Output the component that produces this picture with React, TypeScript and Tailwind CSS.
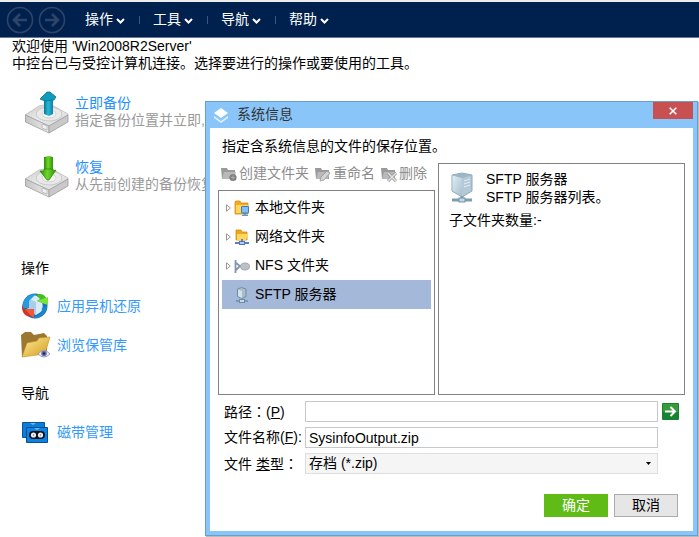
import type { ReactNode } from "react";

const menus = ["操作", "工具", "导航", "帮助"];

function NavArrow({ back }: { back?: boolean }) {
  return (
    <button type="button" aria-label={back ? "后退" : "前进"} className="size-7">
      <svg viewBox="0 0 28 28" className="size-7" fill="none" stroke="#2f4468">
        <circle cx="14" cy="14" r="12.5" strokeWidth="1.6" />
        <path
          d={back ? "M21 14H8.5M14 8l-6 6 6 6" : "M7 14h12.5M14 8l6 6-6 6"}
          strokeWidth="2.6"
        />
      </svg>
    </button>
  );
}

function DriveIcon({ up }: { up?: boolean }) {
  const id = up ? "up" : "down";
  return (
    <svg viewBox="0 0 44 44" className="size-11 shrink-0" aria-hidden="true">
      <defs>
        <linearGradient id={`drive-${id}`} x1="0" y1="0" x2="1" y2="1">
          <stop offset="0" stopColor="#c9c9c9" />
          <stop offset="0.5" stopColor="#ececec" />
          <stop offset="1" stopColor="#d4d4d4" />
        </linearGradient>
        <linearGradient id={`side-${id}`} x1="0" y1="0" x2="1" y2="0">
          <stop offset="0" stopColor="#c4c4c4" />
          <stop offset="1" stopColor="#ededed" />
        </linearGradient>
        <linearGradient id={`arrow-${id}`} x1="0" y1="0" x2="1" y2="0">
          <stop offset="0" stopColor={up ? "#087592" : "#2c8b06"} />
          <stop offset="0.45" stopColor={up ? "#2cb8d8" : "#6ed62a"} />
          <stop offset="1" stopColor={up ? "#0784a5" : "#329506"} />
        </linearGradient>
      </defs>
      <path d="M0 25l14-9 5-1h8l16 9v1L24 36z" fill={`url(#drive-${id})`} stroke="#bdbdbd" strokeWidth=".8" />
      <path d="M.5 25L24 36v7L.5 32z" fill={`url(#side-${id})`} stroke="#9c9c9c" strokeWidth=".8" />
      <path d="M24 36l19-11v7L24 43z" fill="#c9c9c9" stroke="#9c9c9c" strokeWidth=".8" />
      <path d="M17 34v4l5 2v-4z" fill="#f2f2f2" stroke="#aaa" strokeWidth=".7" />
      <ellipse cx="24" cy="24" rx="13" ry="7" fill="#e9e9e9" stroke="#c2c2c2" strokeWidth=".8" />
      <ellipse cx="24" cy="24" rx="7" ry="4" fill="#f3f3f3" stroke="#cdcdcd" strokeWidth=".8" />
      {up ? (
        <>
          <path d="M19 9h9v15l-4 2-5-2z" fill={`url(#arrow-${id})`} />
          <path d="M15 9l7-7h3l6 5-2 3-9 1z" fill="#109aba" stroke="#087592" strokeWidth=".8" />
        </>
      ) : (
        <>
          <path d="M19 3l5-1 4 1v14h-9z" fill={`url(#arrow-${id})`} />
          <path d="M15 17h4v-2h9v2l3-1-7 10h-2z" fill={`url(#arrow-${id})`} stroke="#2c8b06" strokeWidth=".8" />
        </>
      )}
    </svg>
  );
}

function RestoreIcon() {
  return (
    <svg viewBox="0 0 28 28" className="size-7" aria-hidden="true">
      <circle cx="14" cy="14" r="12.5" fill="#1972bd" />
      <circle cx="14" cy="14" r="8" fill="#95c6ed" />
      <path d="M8 7l5-4 8 3v13l-6 4-7-4z" fill="#d9ebfa" />
      <path d="M8 7l7 3v13l-7-4z" fill="#aacde9" />
      <path d="M2 13C3 6 8 2 15 2L8 9v7H1z" fill="#249ddd" />
      <path d="M15 3c6-3 11 1 11 7l1 3-11-4 3-2z" fill="#45bd20" />
      <path d="M16 9l11-4v8z" fill="#7be33b" />
      <path d="M1 12l2 6 1-1h9v8l-2-1C5 26 0 21 1 12z" fill="#d8331d" />
      <path d="M4 17h9v9l-4-3z" fill="#f0583a" />
      <path d="M14 26c7 0 11-5 12-12l-5 2c0 5-3 8-7 8z" fill="#1a87c8" />
    </svg>
  );
}

function VaultIcon() {
  return (
    <svg viewBox="0 0 30 28" className="h-7 w-[30px]" aria-hidden="true">
      <defs>
        <linearGradient id="vault-front" x1="0" y1="0" x2="1" y2="1">
          <stop offset="0" stopColor="#ffeb9b" />
          <stop offset="1" stopColor="#d49b19" />
        </linearGradient>
      </defs>
      <path d="M0 4l4-3h6l3 3 10-2 3 3v15L1 26z" fill="#9b7732" />
      <path d="M1 26L6 12l10-2 2-3 11-1-5 17z" fill="url(#vault-front)" stroke="#c59428" strokeWidth=".6" />
      <path d="M17 23q6-7 12 0-6 6-12 0z" fill="#eef0fa" stroke="#9a9ebb" />
      <circle cx="23" cy="22.5" r="2.8" fill="#6673ad" />
      <circle cx="23" cy="22.5" r="1.2" fill="#23263e" />
    </svg>
  );
}

function TapeIcon() {
  return (
    <svg viewBox="0 0 28 28" className="size-7" aria-hidden="true">
      <path d="M1.5 4.500h22v15h-22z" fill="#087dda" stroke="#07569a" />
      <path d="M9 5l3 2 3-2z" fill="#73bbf2" />
      <path d="M5.500 9.500h21v15h-21z" fill="#0b83e2" stroke="#064f8d" />
      <path d="M13 10l3 2 3-2z" fill="#73bbf2" />
      <rect x="8" y="13" width="16" height="8" rx="4" fill="#07121d" />
      <circle cx="12.500" cy="17" r="2.600" fill="#eee" />
      <circle cx="19.500" cy="17" r="2.600" fill="#eee" />
      <circle cx="12.500" cy="17" r=".7" fill="#777" />
      <circle cx="19.500" cy="17" r=".7" fill="#777" />
    </svg>
  );
}

function ToolIcon({ kind }: { kind: "new" | "rename" | "delete" }) {
  return (
    <svg viewBox="0 0 16 16" className="size-4" aria-hidden="true">
      <path d="M0 2h6l1 2h7v9H1z" fill="#9a9a9a" />
      <path d="M1 13l2-7h12l-2 7z" fill="#b9b9b9" />
      {kind === "new" && (
        <>
          <circle cx="12" cy="11.5" r="3.6" fill="#808080" />
          <path d="M12 9.500v4M10 11.500h4" stroke="#aaa" />
        </>
      )}
      {kind === "rename" && <path d="M5 15l1-4 6-6 3 2-6 7z" fill="#d3d3d3" stroke="#999" strokeWidth=".8" />}
      {kind === "delete" && (
        <>
          <path d="M7 7l8 8M15 7l-8 8" stroke="#909090" strokeWidth="3" />
          <path d="M7 7l8 8M15 7l-8 8" stroke="#e4e4e4" strokeWidth="1.6" />
        </>
      )}
    </svg>
  );
}

function LocalIcon() {
  return (
    <svg viewBox="0 0 16 16" className="size-4" aria-hidden="true">
      <path d="M1 2l1-1h4l1 2h7v11H1z" fill="#f1aa22" stroke="#dc8b0d" strokeWidth=".8" />
      <path d="M2 13V5h12v8z" fill="#ffd75d" />
      <rect x="7.5" y="6.5" width="7" height="6.5" rx=".5" fill="#82bff7" stroke="#397ac2" />
      <path d="M11 13v2M8 15.3h6" stroke="#397ac2" />
    </svg>
  );
}

function NetworkIcon() {
  return (
    <svg viewBox="0 0 16 16" className="size-4" aria-hidden="true">
      <path d="M2 1h5l1 2h5v8H2z" fill="#efa51e" stroke="#d88a0d" strokeWidth=".8" />
      <path d="M3 10V5h11l-2 6H3z" fill="#ffd75d" />
      <path d="M8 10v3M1 14h14" stroke="#5b83bd" strokeWidth="2" />
      <rect x="5.5" y="12.5" width="5" height="3" fill="#a9d0fa" stroke="#5476b7" />
    </svg>
  );
}

function NfsIcon() {
  return (
    <svg viewBox="0 0 16 16" className="size-4" aria-hidden="true">
      <path d="M1.500 2v13M2 5l4 3-4 4" fill="none" stroke="#8495ab" strokeWidth="1.8" />
      <ellipse cx="11" cy="8.500" rx="4.500" ry="3.500" fill="#bcc1c8" stroke="#959da7" strokeWidth=".8" />
    </svg>
  );
}

function ServerIcon({ large }: { large?: boolean }) {
  if (!large) {
    return (
      <svg viewBox="0 0 16 16" className="size-4" aria-hidden="true">
        <path d="M3.500 2l4-1.500 4.500 1.500v7.500l-4 2-4.500-2z" fill="#a9bdca" stroke="#6f8da2" />
        <path d="M4 2.500L8 4v7l-4-2z" fill="#d5e2ea" />
        <path d="M8 12v1M2 14h12" stroke="#6f8da2" strokeWidth="1.600" />
        <rect x="5.500" y="12.500" width="5" height="3" fill="#c7d8e2" stroke="#6f8da2" />
      </svg>
    );
  }
  return (
    <svg viewBox="0 0 22 31" className="h-[31px] w-[22px]" aria-hidden="true">
      <defs>
        <linearGradient id="server-face" x1="0" y1="0" x2="1" y2="1">
          <stop offset="0" stopColor="#e2edf3" />
          <stop offset="1" stopColor="#a5bfce" />
        </linearGradient>
      </defs>
      <path d="M1 3l10-2 10 2v16l-10 6-10-6z" fill="#b4c8d5" stroke="#8da9ba" />
      <path d="M1.500 3.500L11 6v18l-9.500-5.500z" fill="url(#server-face)" />
      <path d="M1.500 3.300L11 1.500l9.500 1.800L11 6z" fill="#9bb6c7" />
      <path d="M13 9l6-2M13 12l6-2M13 15l6-2" fill="none" stroke="#e4eef4" />
      <path d="M11 24v3M1 28h20" stroke="#7f9db0" strokeWidth="3" />
      <rect x="8" y="26" width="6" height="4" fill="#c7d8e2" stroke="#7293a8" />
    </svg>
  );
}

const tree: { label: string; icon: ReactNode; selected?: boolean }[] = [
  { label: "本地文件夹", icon: <LocalIcon /> },
  { label: "网络文件夹", icon: <NetworkIcon /> },
  { label: "NFS 文件夹", icon: <NfsIcon /> },
  { label: "SFTP 服务器", icon: <ServerIcon />, selected: true },
];

function Colon() {
  return <span className="font-['Noto_Sans_CJK_TC',sans-serif]" lang="zh-TW">：</span>;
}

function SideLink({ icon, children }: { icon: ReactNode; children: ReactNode }) {
  return (
    <a href="#" className="flex h-7 w-fit items-center text-[#3399ff]">
      <span className="w-9">{icon}</span>
      {children}
    </a>
  );
}

function TaskRow({ up, title, text }: { up?: boolean; title: string; text: string }) {
  return (
    <div className="flex h-11 items-center gap-[6px] whitespace-nowrap">
      <DriveIcon up={up} />
      <div>
        <a href="#" className="block w-fit text-[#1e90ff]">{title}</a>
        <p className="text-[#999]">{text}</p>
      </div>
    </div>
  );
}

function Dialog() {
  return (
    <section
      role="dialog"
      aria-labelledby="dialog-title"
      className="absolute top-[101px] right-px left-[205px] border border-[#669fd0] bg-[#8ac5f9] px-1 pb-1 shadow-[1px_1px_1px_#bbb]"
    >
      <header className="flex h-[26px] items-start">
        <svg viewBox="0 0 16 16" className="mt-[5px] ml-[3px] size-4" aria-hidden="true">
          <path d="M1 9l7 5 7-5v2l-7 5-7-5z" fill="#dff0fe" />
          <path d="M8 1l7 5-7 5-7-5z" fill="#fff" />
        </svg>
        <h1 id="dialog-title" className="mt-1 ml-2 flex-1 text-[#333]">系统信息</h1>
        <button type="button" aria-label="关闭" className="flex h-[17px] w-10 items-center justify-center bg-[#c75050]">
          <svg viewBox="0 0 8 8" className="size-2" stroke="#fff" strokeWidth="1.6">
            <path d="M.7 .7l6.6 6.6M7.3 .7L.7 7.3" />
          </svg>
        </button>
      </header>
      <div className="bg-white px-2 pt-[10px] pb-[14px]">
        <p className="px-1">指定含系统信息的文件的保存位置。</p>
        <div className="mt-2 flex gap-[3px]">
          <div className="flex w-[217px] shrink-0 flex-col">
            <div className="flex h-[27px] items-start gap-[6px] pt-[2px] pl-[3px] whitespace-nowrap text-[#8c8c8c]">
              <button type="button" className="flex items-center gap-[2px]"><ToolIcon kind="new" />创建文件夹</button>
              <button type="button" className="flex items-center gap-[2px]"><ToolIcon kind="rename" />重命名</button>
              <button type="button" className="flex items-center gap-[2px]"><ToolIcon kind="delete" />删除</button>
            </div>
            <ul role="tree" className="h-[205px] border border-[#828282] px-[3px] pt-[2px]">
              {tree.map((item) => (
                <li
                  key={item.label}
                  role="treeitem"
                  aria-selected={!!item.selected}
                  className={item.selected ? "flex h-[29px] items-center bg-[#a4b9d9]" : "flex h-[29px] items-center"}
                >
                  <span className="w-3 pl-1">
                    {!item.selected && (
                      <svg viewBox="0 0 5 8" className="h-2 w-[5px]" fill="#fff" stroke="#999">
                        <path d="M.5 .8v6.4L4.3 4z" />
                      </svg>
                    )}
                  </span>
                  <span className="mr-[5px]">{item.icon}</span>
                  {item.label}
                </li>
              ))}
            </ul>
          </div>
          <div className="min-w-0 flex-1 border border-[#828282] px-[10px] pt-[6px]">
            <div className="flex">
              <div className="w-[37px] pt-[2px] pl-[2px]"><ServerIcon large /></div>
              <p className="leading-[18px]">SFTP 服务器<br />SFTP 服务器列表。</p>
            </div>
            <p className="mt-[6px]">子文件夹数量:-</p>
          </div>
        </div>
        <form className="mt-[6px] pl-[6px]" onSubmit={(e) => e.preventDefault()}>
          <div className="grid grid-cols-[81px_1fr_27px] items-center gap-y-[5px]">
            <label htmlFor="path" className="whitespace-nowrap">路径<Colon />(<u>P</u>)</label>
            <input id="path" className="h-[21px] w-full border border-[#c8c8c8] px-[3px]" />
            <button type="button" aria-label="转到" className="ml-1 size-[17px]">
              <svg viewBox="0 0 17 17" className="size-[17px]">
                <rect width="17" height="17" rx="1" fill="#168332" />
                <rect x="1" y="1" width="15" height="8" fill="#379b3b" />
                <path d="M3 8.500h10M8.500 4l4.500 4.500L8.500 13" fill="none" stroke="#fff" strokeWidth="2" />
              </svg>
            </button>
            <label htmlFor="filename" className="whitespace-nowrap">文件名称(<u>F</u>):</label>
            <input id="filename" defaultValue="SysinfoOutput.zip" className="h-[21px] w-full border border-[#c8c8c8] px-[3px]" />
            <span />
            <label htmlFor="filetype" className="whitespace-nowrap">文件 <u>类</u>型<Colon /></label>
            <div className="relative">
              <select id="filetype" className="block h-[21px] w-full appearance-none border border-[#dedede] bg-[#f5f5f5] px-[3px]">
                <option>存档 (*.zip)</option>
              </select>
              <svg viewBox="0 0 5 3" className="pointer-events-none absolute top-[9px] right-[7px] h-[3px] w-[5px]" aria-hidden="true">
                <path d="M0 0h5L2.500 3z" />
              </svg>
            </div>
          </div>
          <div className="mt-5 flex justify-end gap-[6px] pr-[7px]">
            <button type="submit" className="h-[23px] w-16 bg-[#60bb16] text-white">确定</button>
            <button type="button" className="h-[23px] w-16 border border-[#acacac] bg-[#e6e6e6]">取消</button>
          </div>
        </form>
      </div>
    </section>
  );
}

export default function App() {
  return (
    <div
      lang="zh-CN"
      className="relative min-h-screen overflow-hidden bg-white font-['Liberation_Sans','Noto_Sans_CJK_SC',sans-serif] text-[14px] leading-[17px] text-black"
    >
      <nav className="flex h-[38px] items-center border-t-2 border-b border-t-[#ececec] border-b-[#66799b] bg-[#00204d] pl-[6px] text-white">
        <div className="flex gap-1">
          <NavArrow back />
          <NavArrow />
        </div>
        <ul className="ml-[19px] flex items-center">
          {menus.map((menu, i) => (
            <li key={menu} className="flex w-[68px] items-center">
              <button type="button" className="flex items-center gap-[3px]">
                {menu}
                <svg viewBox="0 0 9 6" className="mt-[3px] h-[6px] w-[9px]" fill="none" stroke="#fff" strokeWidth="2">
                  <path d="M1 1l3.500 3.500L8 1" />
                </svg>
              </button>
              {i < 3 && <span className="ml-[14px] h-2 w-px bg-[#36578a]" />}
            </li>
          ))}
        </ul>
      </nav>
      <main>
        <div className="px-3">
          <p>欢迎使用 'Win2008R2Server'</p>
          <p>中控台已与受控计算机连接。选择要进行的操作或要使用的工具。</p>
        </div>
        <div className="mt-[18px] flex flex-col gap-5 pl-[25px]">
          <TaskRow up title="立即备份" text="指定备份位置并立即," />
          <TaskRow title="恢复" text="从先前创建的备份恢复" />
        </div>
        <div className="mt-[60px] pl-[21px]">
          <h2 className="leading-5">操作</h2>
          <div className="mt-[14px] flex flex-col gap-[11px]">
            <SideLink icon={<RestoreIcon />}>应用异机还原</SideLink>
            <SideLink icon={<VaultIcon />}>浏览保管库</SideLink>
          </div>
          <h2 className="mt-6 leading-5">导航</h2>
          <div className="mt-[15px]">
            <SideLink icon={<TapeIcon />}>磁带管理</SideLink>
          </div>
        </div>
      </main>
      <Dialog />
    </div>
  );
}
